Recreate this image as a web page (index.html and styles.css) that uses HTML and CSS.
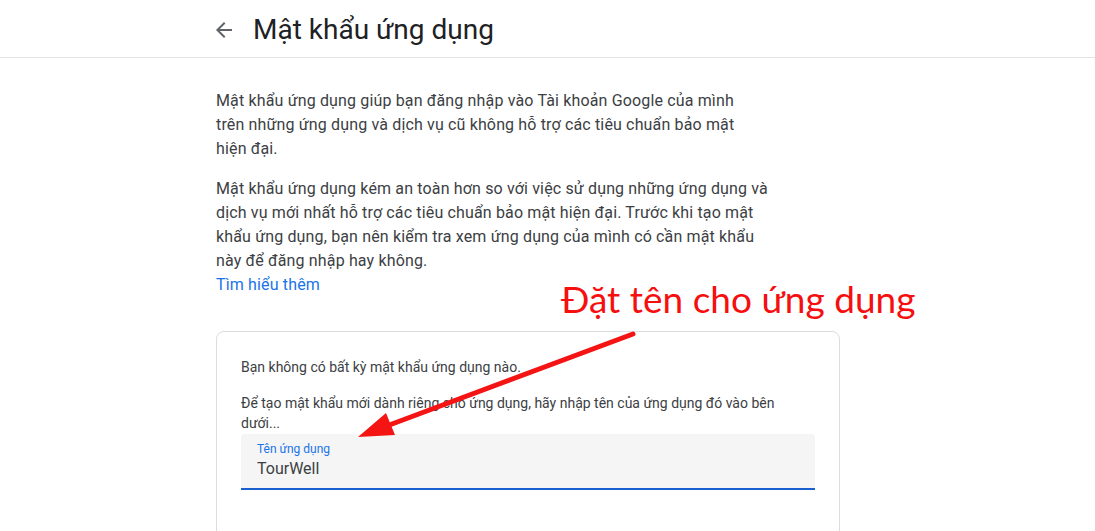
FILE: index.html
```html
<!DOCTYPE html>
<html lang="vi">

<head>
    <meta charset="utf-8" />
    <meta name="viewport" content="width=device-width, initial-scale=1.0" />
    <title>Mật khẩu ứng dụng</title>
    <link rel="stylesheet" href="styles.css">
</head>

<body>
    <div class="page-head">
        <div class="head-inner">
            <a href="javascript:void(0)" class="btn-back" aria-label="Quay lại">
                <svg width="24" height="24" viewBox="0 0 24 24"><path d="M20 11H7.83l5.59-5.59L12 4l-8 8 8 8 1.41-1.41L7.83 13H20v-2z" fill="#5f6368"/></svg>
            </a>
            <h1 class="page-title">Mật khẩu ứng dụng</h1>
        </div>
    </div>

    <div class="main">
        <p class="intro">Mật khẩu ứng dụng giúp bạn đăng nhập vào Tài khoản Google của mình<br>trên những ứng dụng và dịch vụ cũ không hỗ trợ các tiêu chuẩn bảo mật<br>hiện đại.</p>
        <p class="intro">Mật khẩu ứng dụng kém an toàn hơn so với việc sử dụng những ứng dụng và dịch vụ mới nhất hỗ trợ các tiêu chuẩn bảo mật hiện đại. Trước khi tạo mật khẩu ứng dụng, bạn nên kiểm tra xem ứng dụng của mình có cần mật khẩu này để đăng nhập hay không.<br><a href="javascript:void(0)" class="link">Tìm hiểu thêm</a></p>

        <div class="card">
            <p class="card-text">Bạn không có bất kỳ mật khẩu ứng dụng nào.</p>
            <p class="card-text">Để tạo mật khẩu mới dành riêng cho ứng dụng, hãy nhập tên của ứng dụng đó vào bên dưới...</p>
            <div class="field">
                <label for="appname">Tên ứng dụng</label>
                <input type="text" id="appname" value="TourWell">
            </div>
        </div>
    </div>

    <!-- chú thích -->
    <div class="note">Đặt tên cho ứng dụng</div>
    <svg class="note-arrow" width="1095" height="531" viewBox="0 0 1095 531">
        <line x1="633" y1="334" x2="384" y2="427" stroke="#f51414" stroke-width="5" stroke-linecap="round"/>
        <polygon points="358,437 386,413 395,435" fill="#f51414"/>
    </svg>
</body>

</html>
```

FILE: styles.css
```css
* {
    margin: 0;
    padding: 0;
    box-sizing: border-box;
}
body {
    font-family: Roboto, "Noto Sans", Arial, sans-serif;
    color: #202124;
    background-color: #fff;
    position: relative;
}
a {
    text-decoration: none;
}
.page-head {
    height: 58px;
    border-bottom: 1px solid #e3e3e3;
}
.head-inner {
    display: flex;
    align-items: center;
    height: 57px;
    padding-left: 212px;
    padding-top: 2px;
}
.btn-back {
    display: flex;
    width: 24px;
    height: 24px;
}
.page-title {
    margin-left: 17px;
    font-size: 28px;
    font-weight: 400;
    color: #202124;
}
.main {
    padding: 31px 0 0 216px;
}
.intro {
    width: 556px;
    font-size: 16px;
    line-height: 24px;
    letter-spacing: 0.15px;
    color: #3c4043;
    margin-bottom: 16px;
}
.link {
    color: #1a73e8;
}
.card {
    width: 624px;
    height: 220px;
    margin-top: 34px;
    padding: 25px 24px 0;
    border: 1px solid #dadce0;
    border-radius: 8px;
}
.card-text {
    font-size: 14px;
    line-height: 20px;
    color: #3c4043;
    margin-bottom: 16px;
}
.card-text + .card-text {
    margin-bottom: 1px;
}
.field {
    display: flex;
    flex-direction: column;
    height: 56px;
    padding: 7px 16px 0;
    background-color: #f5f5f5;
    border-radius: 4px 4px 0 0;
    border-bottom: 2px solid #1a5fd0;
}
.field label {
    font-size: 12px;
    line-height: 16px;
    color: #1a73e8;
}
.field input {
    border: none;
    background: transparent;
    outline: none;
    font-family: Roboto, Arial, sans-serif;
    font-size: 16px;
    line-height: 24px;
    color: #3c4043;
    padding: 0;
}
/* chú thích màu đỏ */
.note {
    position: absolute;
    left: 561px;
    top: 277px;
    font-family: Lato, "Open Sans", sans-serif;
    font-size: 37px;
    line-height: 44px;
    color: #f50f0f;
    white-space: nowrap;
}
.note-arrow {
    position: absolute;
    left: 0;
    top: 0;
    pointer-events: none;
}
```
